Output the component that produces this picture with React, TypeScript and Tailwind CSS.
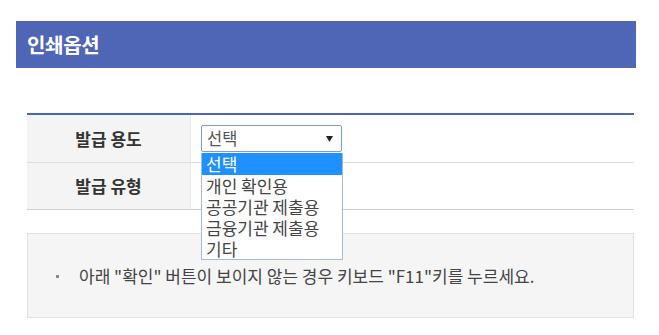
import React from "react";

const font = { fontFamily: '"Noto Sans CJK KR", "Noto Sans", sans-serif' };

export default function App() {
  return (
    <div
      className="relative w-[659px] h-[335px] bg-white overflow-hidden"
      style={font}
    >
      <div className="pt-[21px] pl-[16px] pr-[23px]">
        <div className="h-[47px] bg-[#4e66b5] flex items-center pl-[11px]">
          <span className="text-white font-bold text-[20px] leading-none tracking-[-0.3px]">
            인쇄옵션
          </span>
        </div>
      </div>

      <div className="ml-[27px] w-[607px] mt-[45px]">
        <div className="border-t-[2px] border-[#4a64b6]">
          <div className="flex h-[48px] border-b border-[#dedede]">
            <div className="w-[164px] bg-[#f4f4f4] border-r border-[#e8e8e8] flex items-center justify-center">
              <span className="text-[17px] font-bold text-[#333]">발급 용도</span>
            </div>
            <div className="flex-1 flex items-center pl-[10px]">
              <div className="w-[141px] h-[27px] border border-[#7a9cd9] rounded-[2px] flex items-center justify-between pl-[5px] pr-[8px] bg-white">
                <span className="text-[16.5px] text-[#555] leading-none">선택</span>
                <svg width="7" height="6" viewBox="0 0 7 6">
                  <path d="M0 0 L7 0 L3.5 6 Z" fill="#222" />
                </svg>
              </div>
            </div>
          </div>
          <div className="flex h-[47px] border-b border-[#cfcfcf]">
            <div className="w-[164px] bg-[#f4f4f4] border-r border-[#e8e8e8] flex items-center justify-center">
              <span className="text-[17px] font-bold text-[#333]">발급 유형</span>
            </div>
            <div className="flex-1" />
          </div>
        </div>

        <div className="mt-[23px] h-[85px] bg-[#f5f5f5] border border-[#e0e0e0] flex items-center pl-[28px]">
          <span className="w-[3px] h-[3px] bg-[#888] mr-[20px] mt-[1px]" />
          <span className="text-[17px] text-[#444]">
            아래 "확인" 버튼이 보이지 않는 경우 키보드 "F11"키를 누르세요.
          </span>
        </div>
      </div>

      <div className="absolute left-[201px] top-[153px] w-[142px] h-[107px] bg-white border border-[#a8b8d6] border-t-0">
        {["선택", "개인 확인용", "공공기관 제출용", "금융기관 제출용", "기타"].map((t, i) => (
          <div
            key={t}
            className={
              i === 0
                ? "h-[21.5px] bg-[#1e90ff] text-white text-[17px] leading-[21px] pl-[4px]"
                : "h-[21px] text-[#444] text-[17px] leading-[21px] pl-[4px]"
            }
          >
            {t}
          </div>
        ))}
      </div>
    </div>
  );
}
